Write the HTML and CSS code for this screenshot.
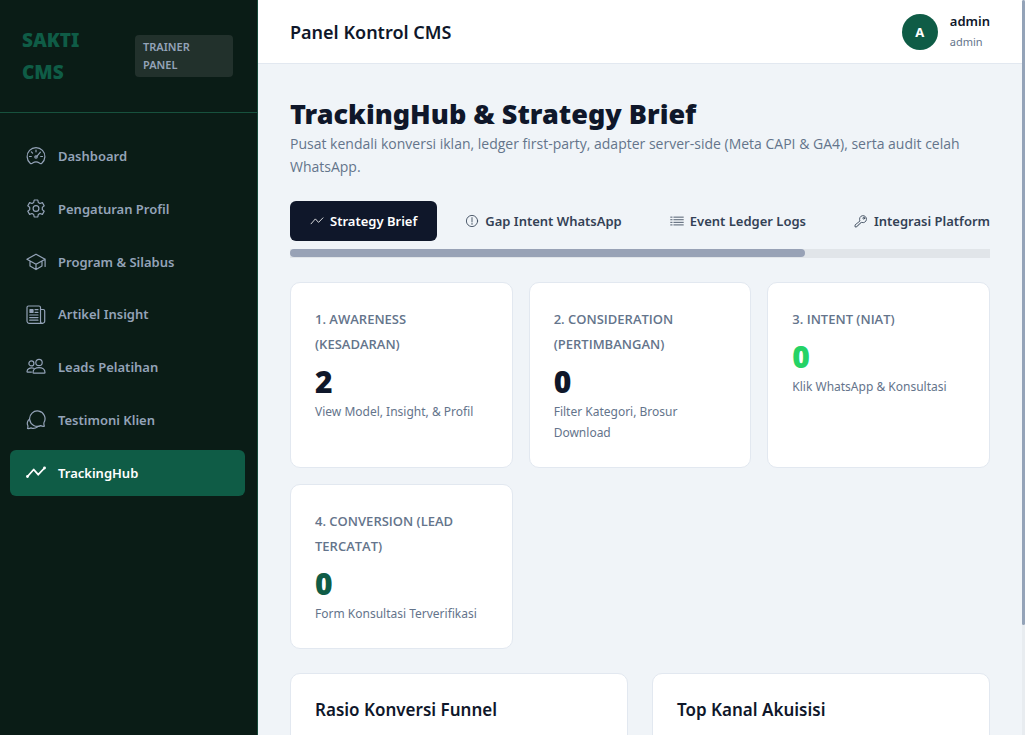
FILE: index.html
```html
<!DOCTYPE html>
<html lang="id">
<head>
<meta charset="utf-8">
<meta name="viewport" content="width=device-width, initial-scale=1">
<title>Panel Kontrol CMS</title>
<link rel="stylesheet" href="styles.css">
</head>
<body>
<div class="app">
  <aside class="sidebar">
    <div class="brand">
      <span class="brand-name">SAKTI CMS</span>
      <span class="brand-tag">TRAINER PANEL</span>
    </div>
    <nav class="nav">
      <a class="nav-link" href="#">
        <svg class="icon" viewBox="0 0 20 20"><path d="M4.200 17.200A8.900 8.900 0 1 1 15.800 17.200Q14.700 18.200 13.400 17.100Q10 14.800 6.600 17.100Q5.300 18.200 4.200 17.200zM10 4v1.800M5.400 5.900l1.200 1.200M3.500 10.500h1.800M14.700 10.500h1.800M14.400 6.200l-3.400 4"/><circle cx="10" cy="11" r="1.200"/></svg>
        Dashboard</a>
      <a class="nav-link" href="#">
        <svg class="icon" viewBox="0 0 20 20"><path d="M8.200 1h3.600l.5 2.500 1.700 1 2.400-.9 1.800 3.100-1.900 1.700v2.200l1.900 1.700-1.800 3.100-2.400-.9-1.700 1-.5 2.500H8.200l-.5-2.500-1.700-1-2.400.9-1.800-3.100 1.900-1.700V8.400L1.800 6.700l1.800-3.100 2.400.9 1.700-1z"/><circle cx="10" cy="9.500" r="2.900"/></svg>
        Pengaturan Profil</a>
      <a class="nav-link" href="#">
        <svg class="icon" viewBox="0 0 20 20"><path d="M10 2.200 .9 7.200 10 12.200l9.100-5zM4 9v5l6 3.600 6-3.600V9M10 12.200v5.400M19.100 7.200v7.300"/></svg>
        Program &amp; Silabus</a>
      <a class="nav-link" href="#">
        <svg class="icon" viewBox="0 0 20 20"><path d="M14.500 17V2.500A1.500 1.500 0 0 0 13 1H2.500A1.500 1.500 0 0 0 1 2.500V16a2.300 2.300 0 0 0 2.300 2.300h13.500M14.500 4.500h2.700a1.500 1.500 0 0 1 1.500 1.500v10.200a2.100 2.100 0 0 1-4.200 0M9 4.700h3M9 7.300h3M3.700 10h8.300M3.700 12.600h8.300M3.700 15.200h8.300"/><path class="solid" d="M4 4.500h3v3H4z"/></svg>
        Artikel Insight</a>
      <a class="nav-link" href="#">
        <svg class="icon" viewBox="0 0 20 20"><circle cx="13" cy="5.500" r="3.200"/><circle cx="5.400" cy="6.400" r="2.500"/><path d="M7 15.500c0-6.500 12-6.500 12 0q0 .7-.8.7H7.800q-.8 0-.8-.7zM7.700 11.300C4.800 10.200 1 11.500 1 14.500q0 .6.600.6h3.800"/></svg>
        Leads Pelatihan</a>
      <a class="nav-link" href="#">
        <svg class="icon" viewBox="0 0 20 20"><path d="M18 12.500a7.700 7.700 0 1 0-3.300 3.100q1.700.9 3.700.6-.8-1.800-.4-3.700zM2.600 9.800C.9 12 1 14 1.900 15.800q.2 1.400-.4 2.700 2 .2 3.500-.6c2 .9 4.500.5 6.300-.8"/></svg>
        Testimoni Klien</a>
      <a class="nav-link active" href="#" aria-current="page">
        <svg class="icon bold" viewBox="0 0 20 20"><path d="m1.500 13.500 6.200-7 4.500 5.200L18.500 5"/><circle class="solid" cx="1.500" cy="13.500" r=".5"/><circle class="solid" cx="18.500" cy="5" r=".5"/></svg>
        TrackingHub</a>
    </nav>
  </aside>

  <div class="main">
    <header class="topbar">
      <span class="topbar-title">Panel Kontrol CMS</span>
      <div class="user">
        <span class="avatar">A</span>
        <span class="user-text"><span class="user-name">admin</span><span class="user-role">admin</span></span>
      </div>
    </header>
    <main class="content">
      <h1 class="title">TrackingHub &amp; Strategy Brief</h1>
      <p class="subtitle">Pusat kendali konversi iklan, ledger first-party, adapter server-side (Meta CAPI &amp; GA4), serta audit celah WhatsApp.</p>

      <div class="tabs">
        <button class="tab selected" type="button">
          <svg class="icon small" viewBox="0 0 20 20"><path d="m1.500 14 6.200-7 4.500 5L18.500 5.500"/></svg>
          Strategy Brief</button>
        <button class="tab" type="button">
          <svg class="icon small" viewBox="0 0 20 20"><circle cx="10" cy="10" r="8"/><path d="M10 5.200v6M10 13.200v1.600"/></svg>
          Gap Intent WhatsApp</button>
        <button class="tab" type="button">
          <svg class="icon small" viewBox="0 0 20 20"><path d="M5.500 4.500H19M5.500 8.200H19M5.500 11.900H19M5.500 15.600H19M1 4.500h2M1 8.200h2M1 11.900h2M1 15.600h2"/></svg>
          Event Ledger Logs</button>
        <button class="tab" type="button">
          <svg class="icon small" viewBox="0 0 20 20"><path d="M8.300 9.500A5 5 0 1 1 11 12L9.500 12.300 8.800 14 7 14.500 6.300 16.300 4.500 17 3.800 18.500H1.500v-2.300z"/><circle cx="14" cy="6" r="1.300"/></svg>
          Integrasi Platform</button>
      </div>
      <div class="tab-track"><div class="tab-thumb"></div></div>

      <section class="stats">
        <article class="card">
          <h2 class="label">1. AWARENESS (KESADARAN)</h2>
          <div class="value">2</div>
          <p class="note">View Model, Insight, &amp; Profil</p>
        </article>
        <article class="card">
          <h2 class="label">2. CONSIDERATION (PERTIMBANGAN)</h2>
          <div class="value">0</div>
          <p class="note">Filter Kategori, Brosur Download</p>
        </article>
        <article class="card">
          <h2 class="label">3. INTENT (NIAT)</h2>
          <div class="value lime">0</div>
          <p class="note">Klik WhatsApp &amp; Konsultasi</p>
        </article>
        <article class="card">
          <h2 class="label">4. CONVERSION (LEAD TERCATAT)</h2>
          <div class="value green">0</div>
          <p class="note">Form Konsultasi Terverifikasi</p>
        </article>
      </section>

      <section class="panels">
        <article class="card panel"><h2 class="panel-title">Rasio Konversi Funnel</h2></article>
        <article class="card panel"><h2 class="panel-title">Top Kanal Akuisisi</h2></article>
      </section>
    </main>
  </div>
  <div class="page-track"><div class="page-thumb"></div></div>
</div>
</body>
</html>
```
FILE: styles.css
```css
* { box-sizing: border-box; margin: 0; }
body {
  font-family: "Noto Sans", "Open Sans", sans-serif;
  font-size: 13px;
  color: #0f172a;
  background: #f0f4f8;
}
.app { display: flex; height: 100vh; overflow: hidden; }

.sidebar {
  flex: 0 0 258px;
  background: #0a1c16;
  border-right: 1px solid #17493a;
}
.brand {
  display: flex;
  align-items: center;
  justify-content: space-between;
  gap: 24px;
  padding: 24px 24px 24px 22px;
  border-bottom: 1px solid #17513d;
}
.brand-name { width: 80px; font-size: 19px; font-weight: 900; line-height: 32px; color: #0f5c46; }
.brand-tag {
  width: 98px;
  padding: 3px 40px 3px 8px;
  border-radius: 4px;
  background: #22312c;
  color: #94a3b8;
  font-size: 11px;
  font-weight: 600;
  line-height: 18px;
}
.nav { display: flex; flex-direction: column; gap: 6px; padding: 20px 12px 20px 10px; }
.nav-link {
  display: flex;
  align-items: center;
  gap: 12px;
  padding: 12px 16px;
  border-radius: 6px;
  color: #94a3b8;
  font-weight: 600;
  line-height: 1.75;
  text-decoration: none;
}
.nav-link.active { background: #0f5c46; color: #fff; }

.icon {
  flex: none;
  width: 20px;
  height: 20px;
  fill: none;
  stroke: currentColor;
  stroke-width: 1.2;
  stroke-linecap: round;
  stroke-linejoin: round;
}
.icon.bold { stroke-width: 1.8; }
.icon.small { width: 14px; height: 14px; }
.icon .solid { fill: currentColor; }

.main { flex: 1; min-width: 0; display: flex; flex-direction: column; }
.topbar {
  flex: none;
  display: flex;
  align-items: center;
  justify-content: space-between;
  height: 64px;
  padding: 0 32px;
  background: #fff;
  border-bottom: 1px solid #e2e8f0;
}
.topbar-title { font-size: 18px; font-weight: 600; }
.user { display: flex; align-items: center; gap: 12px; }
.avatar {
  display: grid;
  place-items: center;
  width: 36px;
  height: 36px;
  border-radius: 50%;
  background: #0f5c46;
  color: #fff;
  font-weight: 700;
}
.user-text { display: flex; flex-direction: column; }
.user-name { font-weight: 600; line-height: 21px; }
.user-role { font-size: 11px; line-height: 20px; color: #64748b; }

.content { flex: 1; min-height: 0; overflow: hidden; padding: 32px; }
.title { font-size: 27px; font-weight: 900; line-height: 36px; }
.subtitle {
  font-family: "Open Sans", "Noto Sans", sans-serif;
  font-size: 14px;
  line-height: 23px;
  color: #64748b;
}
.tabs { display: flex; gap: 8px; margin-top: 23px; overflow: hidden; }
.tab {
  flex: none;
  display: flex;
  align-items: center;
  gap: 6px;
  height: 40px;
  padding: 0 20px;
  border: 0;
  border-radius: 6px;
  background: transparent;
  color: #334155;
  font: inherit;
  font-weight: 600;
}
.tab.selected { background: #0f172a; color: #fff; }
.tab-track { height: 9px; margin: 8px 0 24px; background: #e1e5e9; }
.tab-thumb { width: 73.6%; height: 8px; border-radius: 4px; background: #98a2b6; }

.stats { display: grid; grid-template-columns: repeat(3, 1fr); gap: 16px; }
.card { padding: 24px; border: 1px solid #e2e8f0; border-radius: 10px; background: #fff; }
.label {
  max-width: 160px;
  font-family: "Open Sans", "Noto Sans", sans-serif;
  font-size: 13px;
  font-weight: 600;
  line-height: 25px;
  color: #64748b;
}
.value { margin-top: 6px; font-size: 30px; font-weight: 900; line-height: 38px; }
.value.lime { color: #25d366; }
.value.green { color: #0f5c46; }
.note { font-size: 12px; line-height: 21px; color: #64748b; }

.panels { display: grid; grid-template-columns: 1fr 1fr; gap: 24px; margin-top: 24px; }
.panel { min-height: 240px; padding-top: 21px; }
.panel-title { font-size: 17px; font-weight: 600; line-height: 30px; }

.page-track { flex: 0 0 3px; background: #e8ecf0; }
.page-thumb { height: 85%; border-radius: 2px; background: #94a3b8; }
```
